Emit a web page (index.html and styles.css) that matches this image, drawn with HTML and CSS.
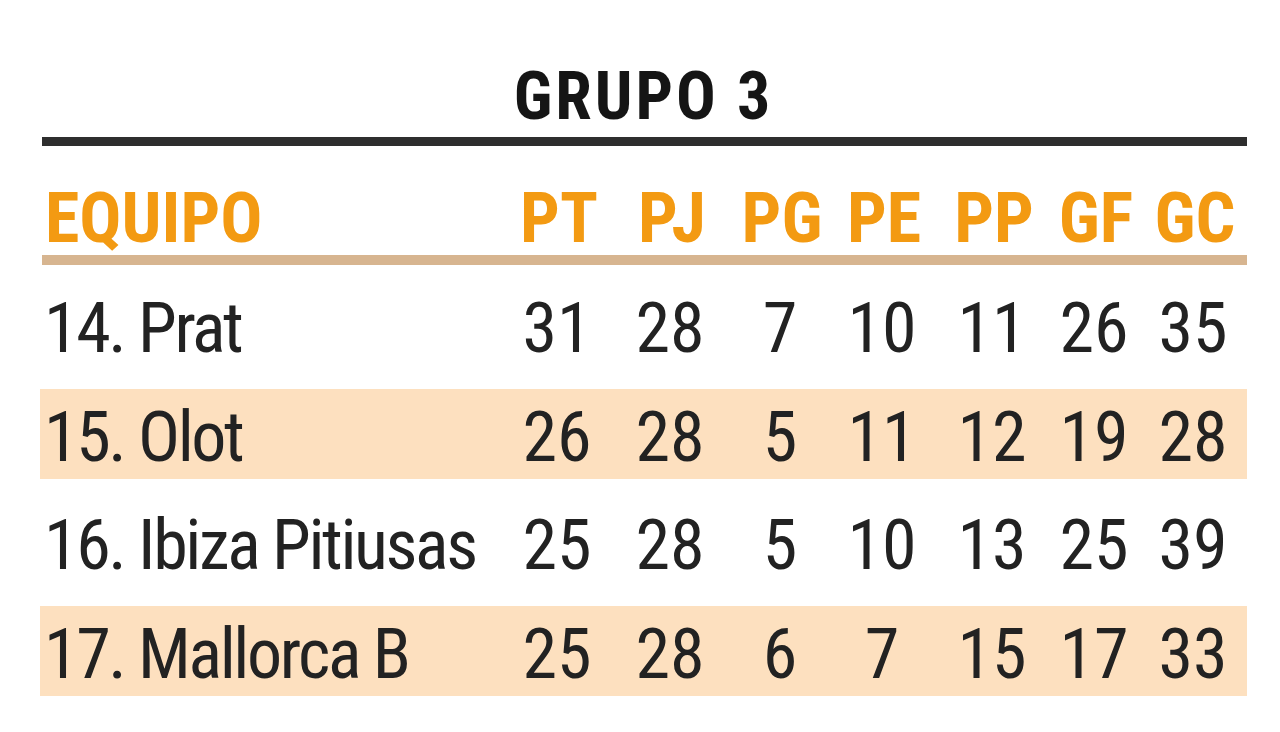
FILE: index.html
```html
<!DOCTYPE html>
<html lang="es">
<head>
<meta charset="utf-8">
<title>Grupo 3</title>
<link rel="stylesheet" href="styles.css">
</head>
<body>
<div class="wrap">
  <h1 class="title">GRUPO 3</h1>
  <div class="rule"></div>
  <div class="row head">
    <div class="team">EQUIPO</div>
    <div>PT</div><div>PJ</div><div>PG</div><div>PE</div><div>PP</div><div>GF</div><div>GC</div>
  </div>
  <div class="rows">
    <div class="row">
      <div class="team">14. Prat</div>
      <div>31</div><div>28</div><div>7</div><div>10</div><div>11</div><div>26</div><div>35</div>
    </div>
    <div class="row band">
      <div class="team">15. Olot</div>
      <div>26</div><div>28</div><div>5</div><div>11</div><div>12</div><div>19</div><div>28</div>
    </div>
    <div class="row">
      <div class="team">16. Ibiza Pitiusas</div>
      <div>25</div><div>28</div><div>5</div><div>10</div><div>13</div><div>25</div><div>39</div>
    </div>
    <div class="row band">
      <div class="team">17. Mallorca B</div>
      <div>25</div><div>28</div><div>6</div><div>7</div><div>15</div><div>17</div><div>33</div>
    </div>
  </div>
</div>
</body>
</html>
```

FILE: styles.css
```css
html, body {
  margin: 0;
  padding: 0;
  background: #ffffff;
}
.wrap {
  width: 1207px;
  margin-left: 40px;
  font-family: "Roboto Condensed", "Liberation Sans Narrow", "DejaVu Sans Condensed", "Roboto", sans-serif;
  font-stretch: condensed;
  color: #222222;
}
.title {
  margin: 0;
  padding-top: 64px;
  height: 73px;
  line-height: 66px;
  font-size: 66px;
  font-weight: 700;
  letter-spacing: 3px;
  text-align: center;
  color: #151515;
}
.rule {
  height: 9px;
  margin-left: 2px;
  background: #2e2e2e;
}
.row {
  display: grid;
  grid-template-columns: 465px 104px 122px 98px 106px 114px 90px 108px;
  align-items: center;
  text-align: center;
  font-size: 70px;
  height: 90px;
  box-sizing: border-box;
  padding-top: 6px;
}
.row .team {
  text-align: left;
  white-space: nowrap;
  padding-left: 4px;
  letter-spacing: -2.4px;
}
.head {
  height: 119px;
  font-weight: 700;
  color: #f39a12;
  font-size: 70px;
  border-bottom: 10px solid #d7b590;
  padding-top: 31px;
  margin-left: 2px;
}
.head .team {
  letter-spacing: 0;
  padding-left: 3px;
}
.rows {
  display: flex;
  flex-direction: column;
  gap: 18.5px;
  padding-top: 15px;
}
.band {
  background: #fde0bf;
}
```
